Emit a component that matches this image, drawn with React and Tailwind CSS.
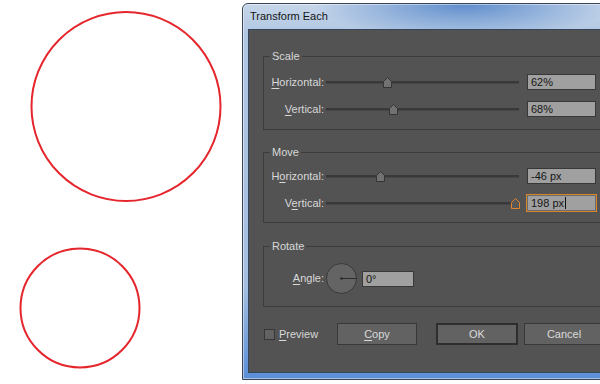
function Thumb({ left, active }) {
  return (
    <svg
      className="absolute top-[3px]"
      style={{ left }}
      width="9"
      height="11"
      viewBox="0 0 9 11"
    >
      <path
        d="M0.5 10.5V4.5L4.5 0.5L8.5 4.5V10.5Z"
        fill={active ? '#575757' : '#727272'}
        stroke={active ? '#e0872b' : '#353535'}
      />
    </svg>
  );
}

function Slider({ left, active }) {
  return (
    <div className="relative ml-[2px] w-[193px] h-[16px] flex items-center">
      <div className="w-full h-[3px] bg-[#393939] border-b border-[#464646]" />
      <Thumb left={left} active={active} />
    </div>
  );
}

function Label({ children }) {
  return <div className="w-[60px] text-right whitespace-nowrap">{children}</div>;
}

function Field({ children, focus }) {
  if (focus) {
    return (
      <div className="ml-[8px] w-[69px] h-[16px] bg-[#a0a0a0] border border-[#6a6a6a] shadow-[0_0_0_1px_#d8862b] text-[11px] leading-[14px] text-[#161616] pl-[3px] flex items-center">
        <span>{children}</span>
        <span className="ml-[1px] w-[1px] h-[12px] bg-[#111]" />
      </div>
    );
  }
  return (
    <div className="ml-[8px] w-[69px] h-[16px] bg-[#a0a0a0] border border-[#383838] text-[11px] leading-[14px] text-[#161616] pl-[3px]">
      {children}
    </div>
  );
}

function Row({ label, left, value, active, className = '' }) {
  return (
    <div className={`flex items-center h-[16px] ${className}`}>
      <Label>{label}</Label>
      <Slider left={left} active={active} />
      <Field focus={active}>{value}</Field>
    </div>
  );
}

function Group({ title, className = '', children }) {
  return (
    <fieldset className={`mx-[14px] border border-[#3c3c3c] ${className}`}>
      <legend className="ml-[6px] px-[2px] text-[11px] leading-[13px] text-[#d8d8d8]">{title}</legend>
      {children}
    </fieldset>
  );
}

function Button({ children, className = '' }) {
  return (
    <div
      className={`h-[22px] flex items-center justify-center bg-[#626262] text-[11px] text-[#dadada] ${className}`}
    >
      {children}
    </div>
  );
}

export default function App() {
  return (
    <div className="w-[600px] h-[384px] overflow-hidden bg-white flex font-['Liberation_Sans',Arial,sans-serif]">
      <svg width="242" height="384" className="shrink-0">
        <circle cx="126" cy="106.5" r="94.5" fill="none" stroke="#e5262d" strokeWidth="2" />
        <circle cx="80" cy="308" r="59.5" fill="none" stroke="#e5262d" strokeWidth="2" />
      </svg>

      <div className="shrink-0 mt-[3px] w-[390px] h-[377px] rounded-tl-[6px] border border-[#3a4658] shadow-[inset_0_0_0_1px_rgba(255,255,255,0.45)] bg-[radial-gradient(150px_34px_at_57%_0px,#5d8ccc,transparent),linear-gradient(180deg,#c6d6ea_0px,#b0c7e2_30px,#a5bfe0_75%,#5a8ed6_100%)] flex flex-col pl-[5px] pb-[6px]">
        <div className="h-[25px] flex items-center pl-[2px] text-[11px] text-[#141414]">
          Transform Each
        </div>

        <div className="flex-1 border border-[#34455c] bg-[#535353] text-[11px] text-[#d8d8d8] flex flex-col">
          <Group title="Scale" className="mt-[20px] pt-[11px] pb-[12px]">
            <Row
              label={<><span className="underline underline-offset-[2px]">H</span>orizontal:</>}
              left={57}
              value="62%"
            />
            <Row
              className="mt-[11px]"
              label={<><span className="underline underline-offset-[2px]">V</span>ertical:</>}
              left={63}
              value="68%"
            />
          </Group>

          <Group title="Move" className="mt-[16px] pt-[9px] pb-[11px]">
            <Row
              label={<>H<span className="underline underline-offset-[2px]">o</span>rizontal:</>}
              left={50}
              value="-46 px"
            />
            <Row
              className="mt-[11px]"
              label={<>V<span className="underline underline-offset-[2px]">e</span>rtical:</>}
              left={185}
              value="198 px"
              active
            />
          </Group>

          <Group title="Rotate" className="mt-[17px] pt-[10px] pb-[12px]">
            <div className="flex items-center h-[31px]">
              <Label>
                <span className="underline underline-offset-[2px]">A</span>ngle:
              </Label>
              <svg className="ml-[2px]" width="31" height="31" viewBox="0 0 31 31">
                <circle cx="15.5" cy="15.5" r="15" fill="#646464" stroke="#3a3a3a" />
                <line x1="15.5" y1="15.5" x2="30.5" y2="15.5" stroke="#2c2c2c" strokeWidth="1" />
                <circle cx="15.5" cy="15.5" r="1.3" fill="#2a2a2a" />
              </svg>
              <div className="ml-[5px] w-[52px] h-[16px] bg-[#a0a0a0] border border-[#383838] leading-[14px] text-[#161616] pl-[3px]">
                0°
              </div>
            </div>
          </Group>

          <div className="mt-[16px] ml-[15px] flex items-center">
            <div className="w-[73px] flex items-center">
              <div className="w-[11px] h-[11px] bg-[#626262] border border-[#363636]" />
              <div className="ml-[4px]">
                <span className="underline underline-offset-[2px]">P</span>review
              </div>
            </div>
            <Button className="w-[80px] border border-[#383838]">
              <span className="underline underline-offset-[2px]">C</span>opy
            </Button>
            <Button className="ml-[19px] w-[82px] border-2 border-[#2e2e2e]">OK</Button>
            <Button className="ml-[6px] w-[80px] border border-[#383838]">Cancel</Button>
          </div>
        </div>
      </div>
    </div>
  );
}
